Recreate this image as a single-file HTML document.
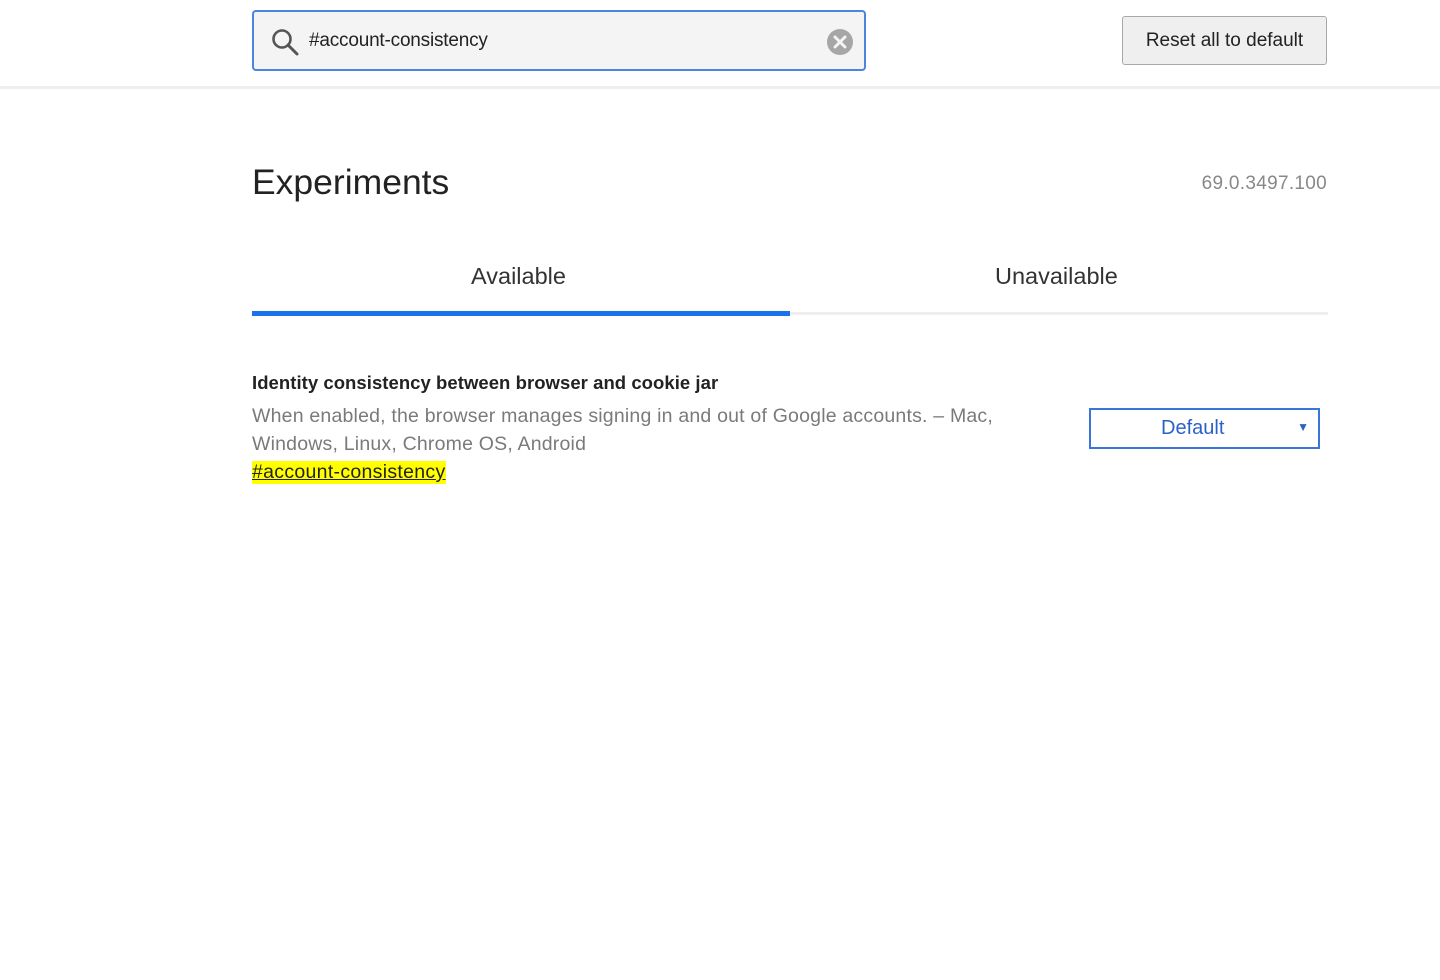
<!DOCTYPE html>
<html><head><meta charset="utf-8"><style>
*{margin:0;padding:0;box-sizing:border-box}
body{width:1440px;height:980px;background:#fff;font-family:"Liberation Sans",Arial,sans-serif;position:relative;overflow:hidden}
.hdr{position:absolute;left:0;top:0;width:1440px;height:89px;background:#fff;border-bottom:3px solid #eeeeee}
.search{position:absolute;left:252px;top:10px;width:614px;height:61px;border:2px solid #4a86e0;border-radius:4px;background:#f4f4f4}
.search .q{position:absolute;left:55px;top:18px;font-size:19px;color:#222;letter-spacing:-0.2px}
.reset{position:absolute;left:1122px;top:16px;width:205px;height:49px;border:1px solid #a8a8a8;border-radius:3px;background:#efefef;font-size:19px;color:#222;text-align:center;line-height:47px}
h1{position:absolute;left:252px;top:162px;font-size:35.5px;font-weight:normal;color:#222}
.ver{position:absolute;right:113px;top:173px;font-size:19px;color:#888;letter-spacing:0.3px}
.tab{position:absolute;top:263px;font-size:23.5px;color:#333}
.line{position:absolute;left:252px;top:312px;width:1076px;height:3px;background:#eeeeee}
.line2{position:absolute;left:252px;top:311px;width:538px;height:5px;background:#1a73e8}
.t{position:absolute;left:252px;top:372px;font-size:18.5px;font-weight:bold;color:#222;letter-spacing:0.05px}
.d{position:absolute;left:252px;top:402px;font-size:19.5px;color:#7a7a7a;line-height:28px;width:800px;letter-spacing:0.2px}
.a{position:absolute;left:252px;top:461px;font-size:19.5px;color:#222;background:#ffff00;text-decoration:underline;letter-spacing:0.3px}
.sel{position:absolute;left:1089px;top:408px;width:231px;height:41px;border:2px solid #3a76d8;background:#fff;color:#2a62c8;font-size:20px;line-height:37px}
.sel b{font-weight:normal;position:absolute;left:70px}
.sel span{position:absolute;right:9px;top:-1px;font-size:12px}
</style></head><body>
<div class="hdr">
 <div class="search">
  <svg style="position:absolute;left:16px;top:15px" width="30" height="30" viewBox="0 0 30 30"><circle cx="12" cy="12" r="8.5" fill="none" stroke="#555" stroke-width="2.6"/><path d="M18 18 L27 27" stroke="#555" stroke-width="3" stroke-linecap="round"/></svg>
  <div class="q">#account-consistency</div>
  <svg style="position:absolute;left:572px;top:16px" width="28" height="28" viewBox="0 0 28 28"><circle cx="14" cy="14" r="13" fill="#a6a6a6"/><path d="M9 9 L19 19 M19 9 L9 19" stroke="#f4f4f4" stroke-width="3" stroke-linecap="round"/></svg>
 </div>
 <div class="reset">Reset all to default</div>
</div>
<h1>Experiments</h1>
<div class="ver">69.0.3497.100</div>
<div class="tab" style="left:471px">Available</div>
<div class="tab" style="left:995px">Unavailable</div>
<div class="line"></div><div class="line2"></div>
<div class="t">Identity consistency between browser and cookie jar</div>
<div class="d">When enabled, the browser manages signing in and out of Google accounts. – Mac,<br>Windows, Linux, Chrome OS, Android</div>
<div class="a">#account-consistency</div>
<div class="sel"><b>Default</b><span>▼</span></div>
</body></html>
